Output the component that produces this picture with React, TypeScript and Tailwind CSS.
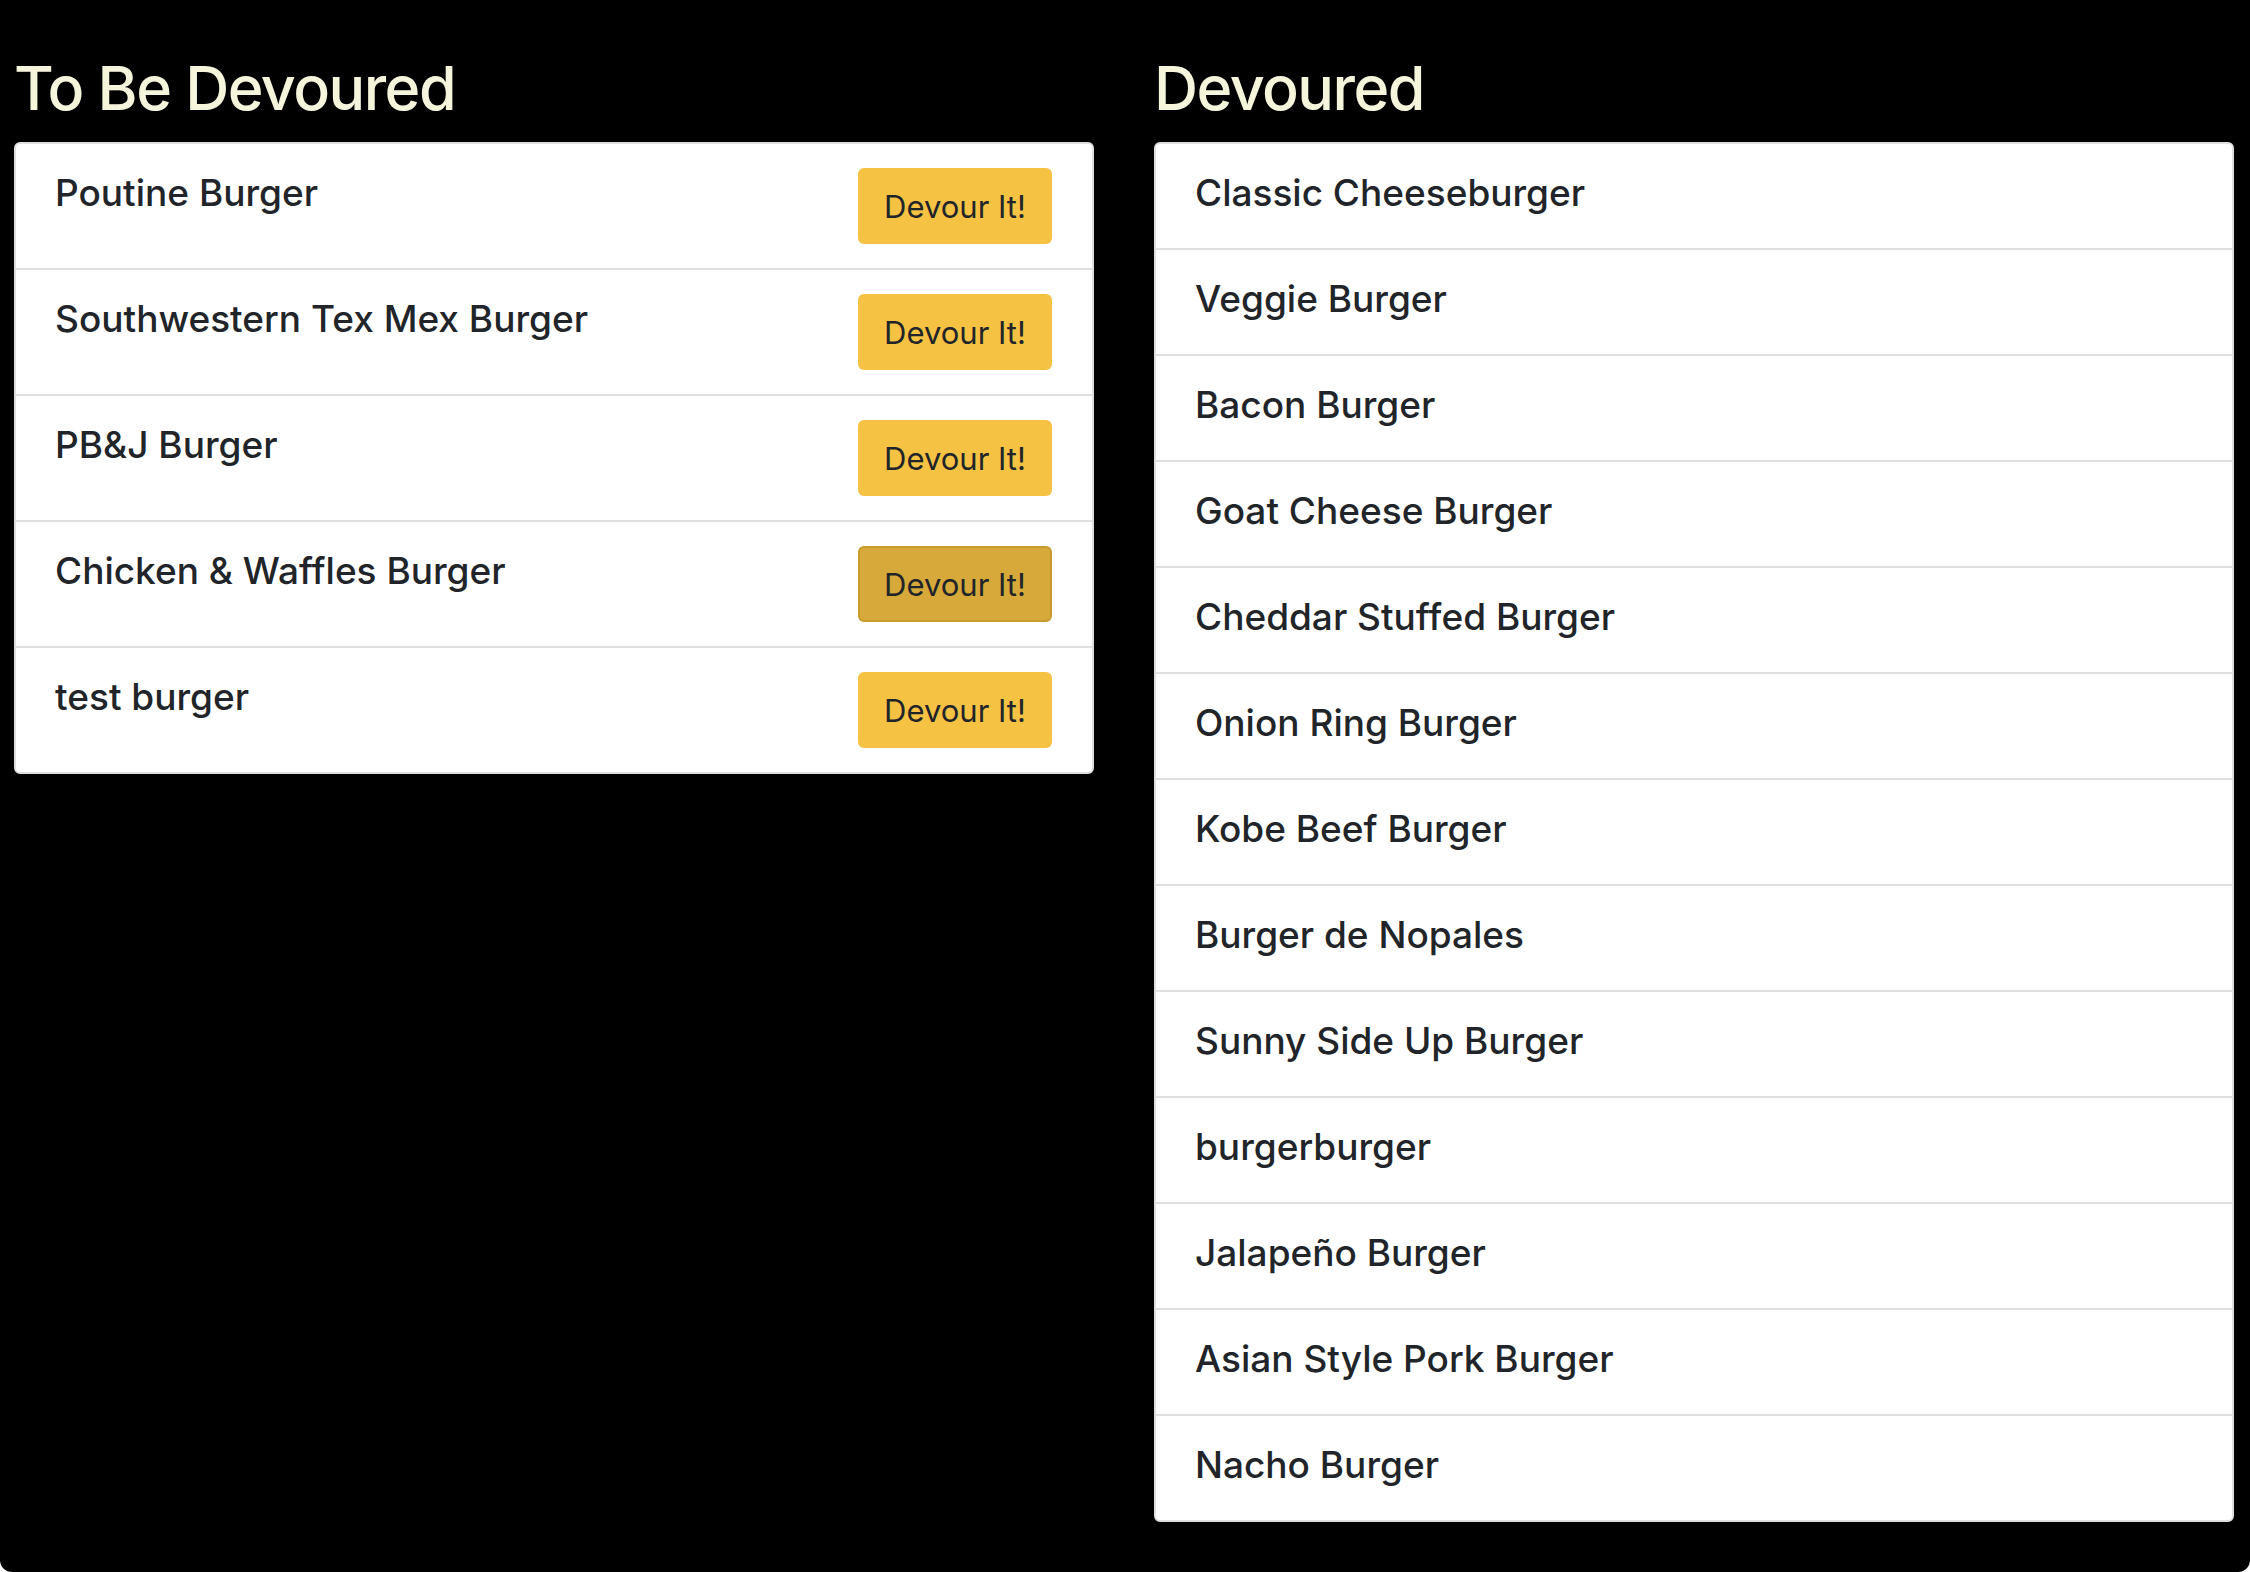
import React from "react";

const toEat = [
  "Poutine Burger",
  "Southwestern Tex Mex Burger",
  "PB&J Burger",
  "Chicken & Waffles Burger",
  "test burger",
];

const eaten = [
  "Classic Cheeseburger",
  "Veggie Burger",
  "Bacon Burger",
  "Goat Cheese Burger",
  "Cheddar Stuffed Burger",
  "Onion Ring Burger",
  "Kobe Beef Burger",
  "Burger de Nopales",
  "Sunny Side Up Burger",
  "burgerburger",
  "Jalapeño Burger",
  "Asian Style Pork Burger",
  "Nacho Burger",
];

const font = { fontFamily: "Inter, 'Noto Sans', sans-serif" };

export default function App() {
  return (
    <div className="bg-white" style={font}>
      <div className="h-[1572px] bg-black rounded-b-[12px] overflow-hidden">
        <div className="grid grid-cols-2 gap-[60px] pl-[14px] pr-[16px] pt-[50px]">
          <div>
            <h1 className="text-[#f5f5dc] text-[61px] leading-[77px] font-medium tracking-[-0.025em] mb-[15px]">
              To Be Devoured
            </h1>
            <ul className="bg-white border-[2px] border-[#dfdfdf] rounded-[6px] overflow-hidden">
              {toEat.map((name, i) => (
                <li
                  key={name}
                  className={`flex justify-between items-start pl-[39px] pr-[40px] pt-[24px] pb-[24px] ${
                    i > 0 ? "border-t-[2px] border-[#dfdfdf]" : ""
                  }`}
                >
                  <span className="text-[#212529] text-[37px] leading-[50px] font-medium">
                    {name}
                  </span>
                  <button
                    className={`w-[194px] h-[76px] rounded-[6px] text-[#212529] text-[31px] leading-none flex items-center justify-center ${
                      i === 3
                        ? "bg-[#d7a93a] border-[2px] border-[#c89a2e]"
                        : "bg-[#f6c244]"
                    }`}
                  >
                    Devour It!
                  </button>
                </li>
              ))}
            </ul>
          </div>
          <div>
            <h1 className="text-[#f5f5dc] text-[61px] leading-[77px] font-medium tracking-[-0.025em] mb-[15px]">
              Devoured
            </h1>
            <ul className="bg-white border-[2px] border-[#dfdfdf] rounded-[6px] overflow-hidden">
              {eaten.map((name, i) => (
                <li
                  key={name}
                  className={`pl-[39px] pr-[40px] pt-[24px] pb-[30px] ${
                    i > 0 ? "border-t-[2px] border-[#dfdfdf]" : ""
                  }`}
                >
                  <span className="block text-[#212529] text-[37px] leading-[50px] font-medium">
                    {name}
                  </span>
                </li>
              ))}
            </ul>
          </div>
        </div>
      </div>
    </div>
  );
}
